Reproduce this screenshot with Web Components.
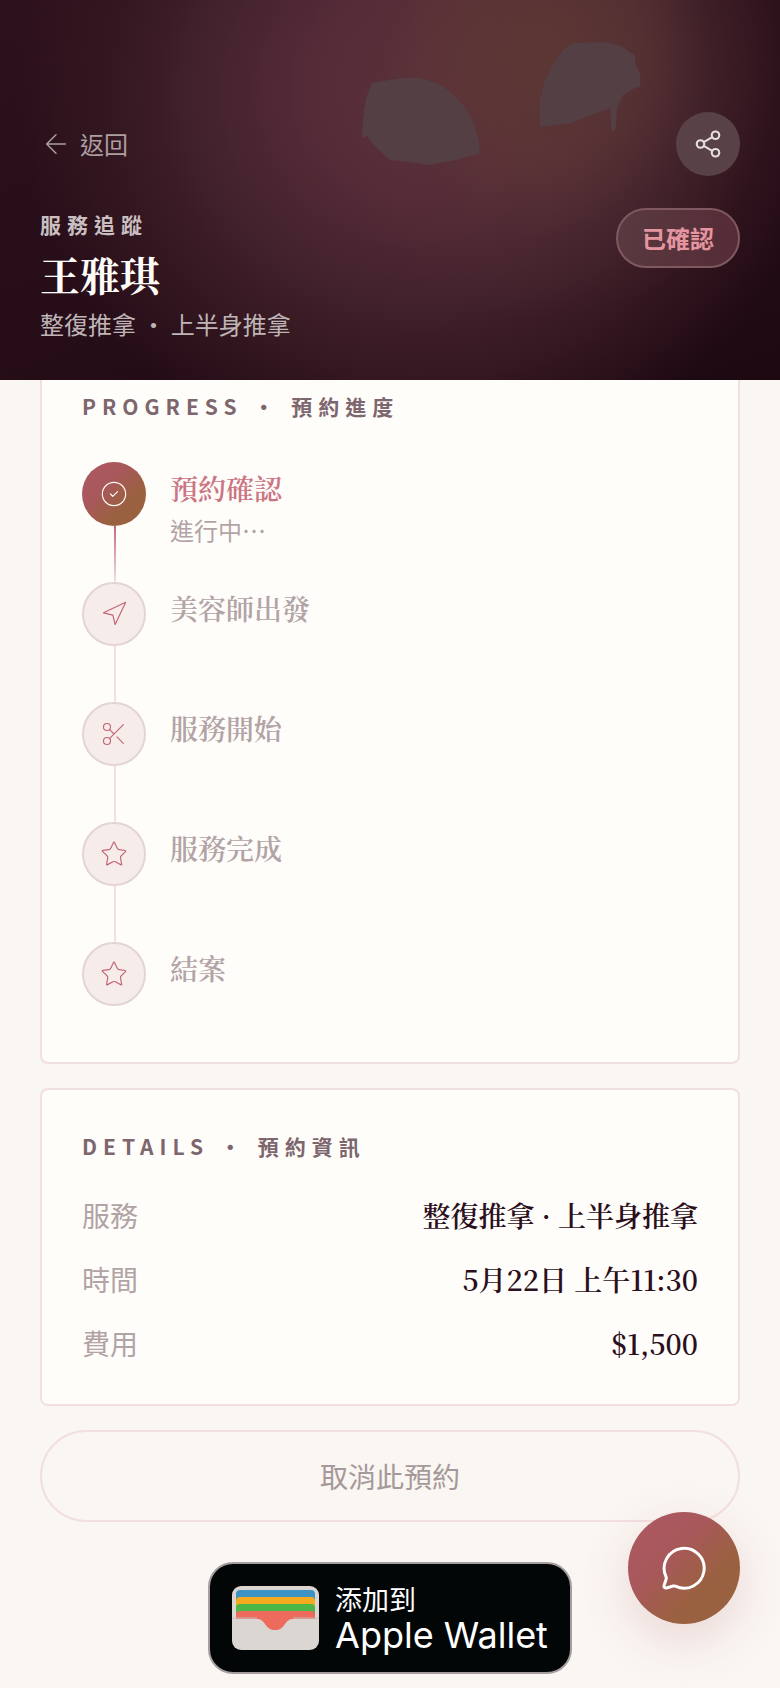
<!DOCTYPE html>
<html lang="zh-Hant">
<head>
<meta charset="utf-8">
<meta name="viewport" content="width=device-width, initial-scale=1">
<title>服務追蹤</title>
<style>
:root {
    --cream: #faf6f2;
    --paper: #fffdf9;
    --line: #f2dfe1;
    --ink: #2b0f1c;
    --ink-soft: #7d666e;
    --ink-mute: #b1a3a6;
    --rose: #cb7483;
    --accent: linear-gradient(135deg, #ab5860 15%, #a8585a 38%, #9a6140 68%, #9a6140 100%);
    --serif: "Noto Serif CJK TC", "Noto Serif TC", "Liberation Serif", "Noto Sans CJK TC", serif;
}
body {
    margin: 0;
    background-color: var(--cream);
    color: var(--ink);
    font-family: "Noto Sans CJK TC", "Noto Sans", sans-serif;
}
</style>
</head>
<body>
<booking-page>
    <booking-hero slot="hero" name="王雅琪" service="整復推拿 ・ 上半身推拿" status="已確認">服務追蹤</booking-hero>
    <info-card heading="PROGRESS ・ 預約進度">
        <step-list>
            <step-item icon="check" state="active" note="進行中⋯">預約確認</step-item>
            <step-item icon="send">美容師出發</step-item>
            <step-item icon="scissors">服務開始</step-item>
            <step-item icon="star">服務完成</step-item>
            <step-item icon="star" last>結案</step-item>
        </step-list>
    </info-card>
    <info-card heading="DETAILS ・ 預約資訊">
        <detail-row label="服務">整復推拿 · 上半身推拿</detail-row>
        <detail-row label="時間">5月22日 上午11:30</detail-row>
        <detail-row label="費用">$1,500</detail-row>
    </info-card>
    <cancel-button>取消此預約</cancel-button>
    <wallet-badge hint="添加到">Apple Wallet</wallet-badge>
    <chat-button slot="float"></chat-button>
</booking-page>

<script>
const icons = {
    back: '<path d="M19 12H5M12 19l-7-7 7-7"/>',
    share: '<circle cx="18" cy="5" r="3"/><circle cx="6" cy="12" r="3"/><circle cx="18" cy="19" r="3"/><path d="M8.6 13.5l6.8 4M15.4 6.5l-6.8 4"/>',
    check: '<circle cx="12" cy="12" r="10"/><path d="M9 12l2 2 4-4"/>',
    send: '<path d="M3 11l19-9-9 19-2-8-8-2z"/>',
    scissors: '<circle cx="6" cy="6" r="3"/><circle cx="6" cy="18" r="3"/><path d="M20 4L8.1 15.9M14.5 14.5L20 20M8.1 8.1L12 12"/>',
    star: '<path d="M11.5 2.3a.5.5 0 0 1 1 0l2.3 4.7a2.1 2.1 0 0 0 1.6 1.2l5.2.8a.5.5 0 0 1 .3.9l-3.7 3.6a2.1 2.1 0 0 0-.6 1.9l.9 5.1a.5.5 0 0 1-.8.6l-4.6-2.4a2.1 2.1 0 0 0-2 0l-4.6 2.4a.5.5 0 0 1-.8-.6l.9-5.1a2.1 2.1 0 0 0-.6-1.9L2.1 9.8a.5.5 0 0 1 .3-.9l5.2-.7a2.1 2.1 0 0 0 1.6-1.2z"/>',
    chat: '<path d="M3 16.300a2 2 0 0 1 .1 1.200l-1.100 3.300a1 1 0 0 0 1.200 1.200l3.400-1a2 2 0 0 1 1.100.1 10 10 0 1 0-4.700-4.800"/>'
};

function icon(name, size, stroke) {
    return `<svg width="${size}" height="${size}" viewBox="0 0 24 24" fill="none" stroke="currentColor"
        stroke-width="${stroke}" stroke-linecap="round" stroke-linejoin="round" aria-hidden="true">${icons[name]}</svg>`;
}

class BookingPage extends HTMLElement {

    connectedCallback() {
        this.attachShadow({mode: 'open'}).innerHTML = `
<style>
:host {
    display: block;
}
main {
    display: flex;
    flex-direction: column;
    gap: 24px;
    margin-top: -32px;
    padding: 0 40px 14px;
}
</style>
<slot name="hero"></slot>
<main><slot></slot></main>
<slot name="float"></slot>
`;
    }
}

class BookingHero extends HTMLElement {

    connectedCallback() {
        this.attachShadow({mode: 'open'}).innerHTML = `
<style>
:host {
    display: block;
    position: sticky;
    top: 0;
    z-index: 2;
    color: #fffdf9;
}
header {
    position: relative;
    padding: 112px 40px 38px;
    background:
        radial-gradient(ellipse 30% 70% at 70% 14%, rgba(94, 58, 50, 0.8) 0%, rgba(94, 56, 54, 0.65) 40%, rgba(88, 50, 54, 0.25) 70%, rgba(80, 44, 50, 0) 100%),
        radial-gradient(ellipse 52% 100% at 54% 24%, #5a303b 0%, #552b38 28%, #43222d 54%, #341720 76%, rgba(43, 15, 26, 0) 100%),
        linear-gradient(160deg, #2d111d 0%, #260d18 55%, #1d0812 100%);
}
.blobs {
    position: absolute;
    top: 0;
    left: 46%;
}
.bar, .info {
    position: relative;
    display: flex;
    justify-content: space-between;
}
.bar {
    align-items: center;
    margin-bottom: 32px;
}
.info {
    align-items: flex-start;
}
.back {
    display: flex;
    align-items: center;
    gap: 8px;
    color: rgba(255, 253, 249, 0.6);
    font-size: 24px;
    line-height: 36px;
    text-decoration: none;
}
.share {
    display: flex;
    align-items: center;
    justify-content: center;
    width: 64px;
    height: 64px;
    padding: 0;
    border: none;
    border-radius: 50%;
    background-color: #594247;
    color: #e6dedd;
    cursor: pointer;
}
.eyebrow {
    margin: 0;
    color: #c9bfc1;
    font-size: 21px;
    font-weight: 700;
    line-height: 32px;
    letter-spacing: 6px;
}
h1 {
    margin: 4px 0 2px;
    font-family: var(--serif);
    font-size: 40px;
    font-weight: 700;
    line-height: 60px;
}
.service {
    margin: 0;
    color: #bfb4b6;
    font-size: 24px;
    line-height: 36px;
}
.status {
    padding: 10px 24px;
    border: 2px solid #80585f;
    border-radius: 30px;
    background: linear-gradient(100deg, #5a3a40, #552b37);
    color: #e495a0;
    font-size: 24px;
    font-weight: 700;
    line-height: 36px;
}
</style>
<header>
    <svg class="blobs" width="300" height="180" viewBox="0 0 300 180" fill="#533f44" aria-hidden="true">
        <path d="M13 83L30 80 45 78 61 78 78 83 90 91 104 105 112 117 117 130 120 142 121 153 98 160 69 165 50 162 31 160 20 150 13 143 8 136 3 138 4 118 7 98z"/>
        <path d="M198 58L206 48 214 43 246 42 262 46 276 56 277 66 281 74 281 87 276 88 264 95 258 107 257 128 254 133 252 126 251 108 230 116 211 123 181 127 181 100 186 80z"/>
    </svg>
    <div class="bar">
        <a class="back" href="#">${icon("back", 32, 1.1)}返回</a>
        <button class="share" aria-label="分享">${icon("share", 30, 1.7)}</button>
    </div>
    <div class="info">
        <div>
            <p class="eyebrow"><slot></slot></p>
            <h1>${this.getAttribute("name")}</h1>
            <p class="service">${this.getAttribute("service")}</p>
        </div>
        <span class="status">${this.getAttribute("status")}</span>
    </div>
</header>
`;
    }
}

class InfoCard extends HTMLElement {

    connectedCallback() {
        this.attachShadow({mode: 'open'}).innerHTML = `
<style>
:host {
    display: block;
    padding: 40px;
    border: 2px solid var(--line);
    border-radius: 8px;
    background-color: var(--paper);
}
h2 {
    margin: 0;
    color: var(--ink-soft);
    font-size: 21px;
    font-weight: 700;
    line-height: 32px;
    letter-spacing: 6px;
}
.content {
    display: flex;
    flex-direction: column;
    gap: 22px;
    margin-top: 32px;
}
</style>
<h2>${this.getAttribute("heading")}</h2>
<div class="content"><slot></slot></div>
`;
    }
}

class StepList extends HTMLElement {

    connectedCallback() {
        this.attachShadow({mode: 'open'}).innerHTML = `
<style>
:host {
    display: block;
    padding: 8px 0 16px;
}
</style>
<slot></slot>
`;
    }
}

class StepItem extends HTMLElement {

    connectedCallback() {
        const note = this.getAttribute("note");
        this.attachShadow({mode: 'open'}).innerHTML = `
<style>
:host {
    display: flex;
    gap: 24px;
    color: var(--ink-mute);
}
.dot {
    display: flex;
    align-items: center;
    justify-content: center;
    box-sizing: border-box;
    width: 64px;
    height: 64px;
    border: 2px solid #e3d4d5;
    border-radius: 50%;
    background-color: #f6edeb;
    color: #c4647a;
}
.line {
    width: 2px;
    height: 56px;
    margin-left: 32px;
    background-color: var(--line);
}
.body {
    padding-top: 6px;
}
.title {
    font-family: var(--serif);
    font-size: 28px;
    font-weight: 600;
    line-height: 40px;
}
.note {
    margin-top: 4px;
    font-size: 24px;
    line-height: 36px;
}
:host([state="active"]) .dot {
    border: none;
    background: var(--accent);
    color: #fffdf9;
}
:host([state="active"]) .line {
    background: linear-gradient(#c76a7e, var(--line));
}
:host([state="active"]) .title {
    color: var(--rose);
}
:host([last]) .line {
    display: none;
}
</style>
<div>
    <div class="dot">${icon(this.getAttribute("icon"), 28, 1)}</div>
    <div class="line"></div>
</div>
<div class="body">
    <div class="title"><slot></slot></div>
    ${note ? `<div class="note">${note}</div>` : ""}
</div>
`;
    }
}

class DetailRow extends HTMLElement {

    connectedCallback() {
        this.attachShadow({mode: 'open'}).innerHTML = `
<style>
:host {
    display: flex;
    justify-content: space-between;
    font-size: 28px;
    line-height: 42px;
}
.label {
    color: var(--ink-mute);
}
.value {
    font-family: var(--serif);
    font-weight: 600;
}
</style>
<span class="label">${this.getAttribute("label")}</span>
<span class="value"><slot></slot></span>
`;
    }
}

class CancelButton extends HTMLElement {

    connectedCallback() {
        this.attachShadow({mode: 'open'}).innerHTML = `
<style>
:host {
    display: block;
}
button {
    width: 100%;
    padding: 24px;
    border: 2px solid var(--line);
    border-radius: 46px;
    background: none;
    color: #a6999b;
    font: inherit;
    font-size: 28px;
    line-height: 40px;
    cursor: pointer;
}
</style>
<button><slot></slot></button>
`;
    }
}

class WalletBadge extends HTMLElement {

    connectedCallback() {
        this.attachShadow({mode: 'open'}).innerHTML = `
<style>
:host {
    display: flex;
    justify-content: center;
    margin-top: 16px;
}
a {
    display: flex;
    align-items: center;
    gap: 16px;
    padding: 16px 22px;
    border: 2px solid #a69da0;
    border-radius: 25px;
    background-color: #020606;
    color: #fff;
    text-decoration: none;
}
.text {
    display: flex;
    flex-direction: column;
}
.hint {
    font-size: 27px;
    line-height: 38px;
}
.name {
    font-family: Inter, "Liberation Sans", sans-serif;
    font-size: 36px;
    line-height: 34px;
    padding-bottom: 4px;
}
</style>
<a href="#">
    <svg width="87" height="64" viewBox="0 0 87 64" aria-hidden="true">
        <rect width="87" height="64" rx="9" fill="#dcd6d2"/>
        <path d="M4 32V8a4 4 0 0 1 4-4h71a4 4 0 0 1 4 4v24z" fill="#3d94c4"/>
        <path d="M4 32V15a4 4 0 0 1 4-4h71a4 4 0 0 1 4 4v17z" fill="#f4ab20"/>
        <path d="M4 32V22a4 4 0 0 1 4-4h71a4 4 0 0 1 4 4v10z" fill="#4bb749"/>
        <path d="M4 33V29a4 4 0 0 1 4-4h71a4 4 0 0 1 4 4v4H61c-4 0-6 2-8 5-3 4-5 6-10 6s-7-2-10-6c-2-3-4-5-8-5z" fill="#ed6b5c"/>
        <path d="M0 32h25M61 32h26" stroke="#c9bfbf" fill="none"/>
    </svg>
    <span class="text">
        <span class="hint">${this.getAttribute("hint")}</span>
        <span class="name"><slot></slot></span>
    </span>
</a>
`;
    }
}

class ChatButton extends HTMLElement {

    connectedCallback() {
        this.attachShadow({mode: 'open'}).innerHTML = `
<style>
:host {
    position: fixed;
    right: 40px;
    bottom: 64px;
    z-index: 3;
}
button {
    display: flex;
    align-items: center;
    justify-content: center;
    width: 112px;
    height: 112px;
    padding: 0;
    border: none;
    border-radius: 50%;
    background: var(--accent);
    box-shadow: 0 16px 48px rgba(176, 88, 106, 0.2);
    color: #fff;
    cursor: pointer;
}
</style>
<button aria-label="聊天">${icon("chat", 48, 1.5)}</button>
`;
    }
}

customElements.define("booking-page", BookingPage);
customElements.define("booking-hero", BookingHero);
customElements.define("info-card", InfoCard);
customElements.define("step-list", StepList);
customElements.define("step-item", StepItem);
customElements.define("detail-row", DetailRow);
customElements.define("cancel-button", CancelButton);
customElements.define("wallet-badge", WalletBadge);
customElements.define("chat-button", ChatButton);
</script>
</body>
</html>
